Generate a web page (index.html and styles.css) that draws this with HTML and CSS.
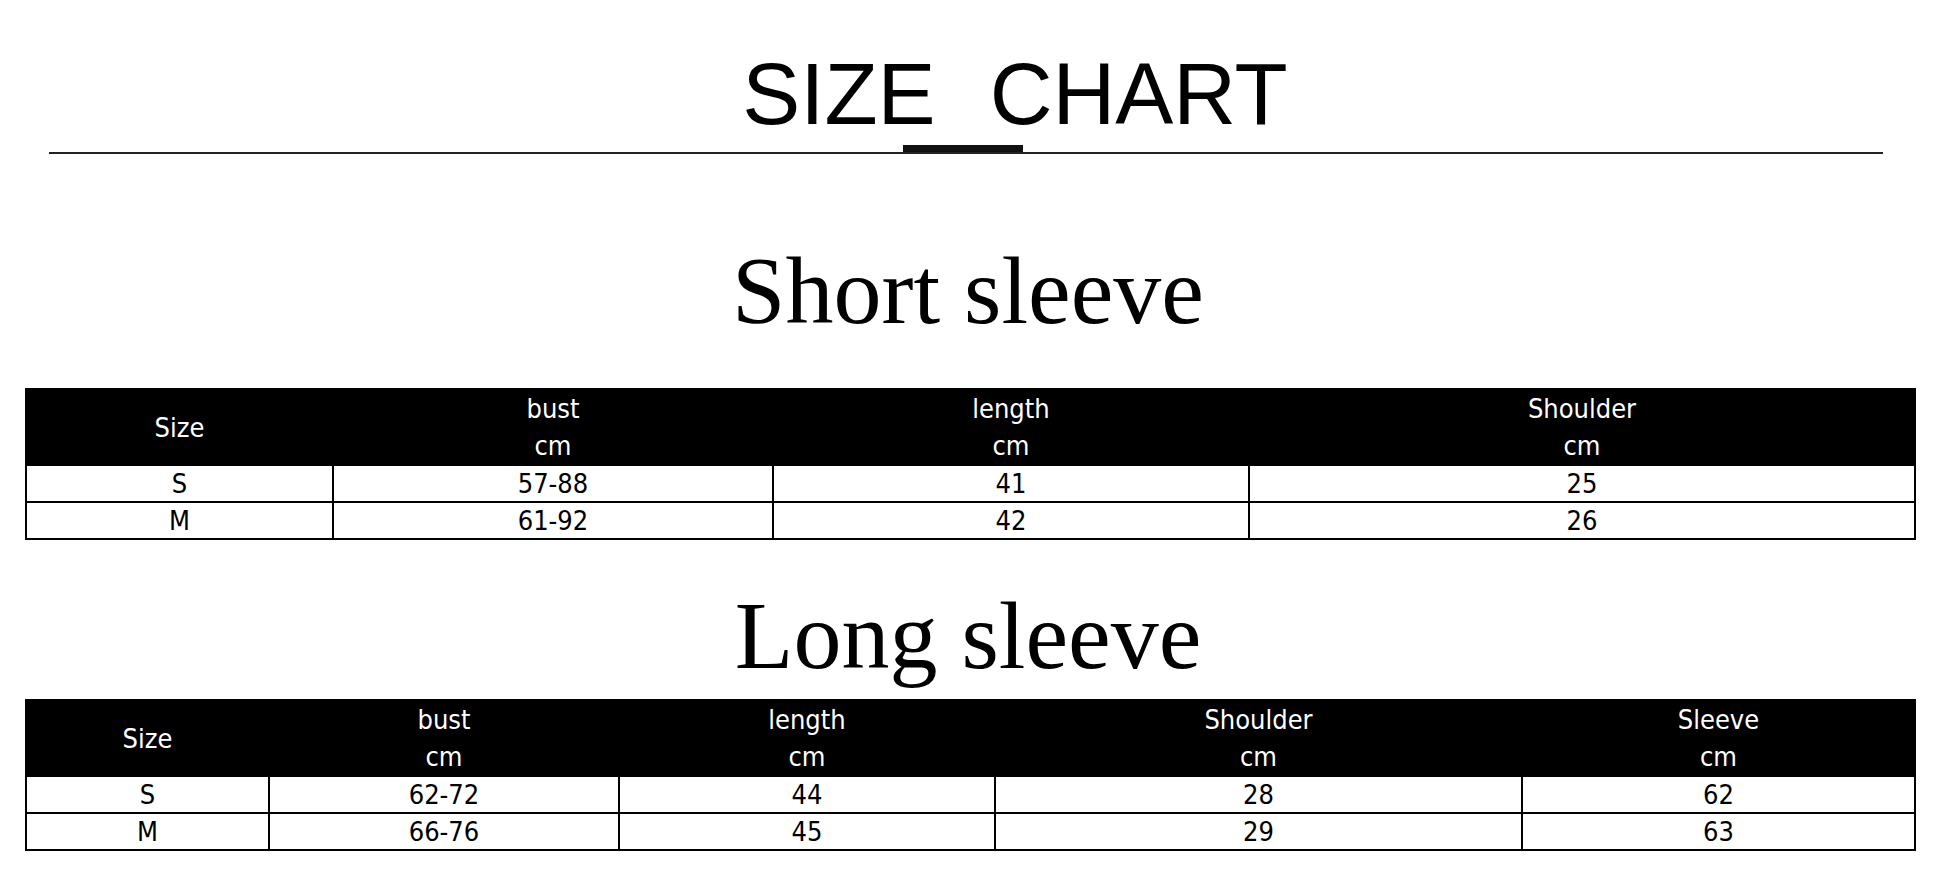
FILE: index.html
```html
<!DOCTYPE html>
<html>
<head>
<meta charset="utf-8">
<link rel="stylesheet" href="styles.css">
</head>
<body>
<div class="page">
  <div class="title"><span>SIZE</span><span>CHART</span></div>
  <div class="rule"><div class="rule-bar"></div></div>

  <h2 class="section short">Short sleeve</h2>
  <table class="chart chart-short">
    <colgroup>
      <col class="s1"><col class="s2"><col class="s3"><col class="s4">
    </colgroup>
    <thead>
      <tr><th>Size</th><th>bust<br>cm</th><th>length<br>cm</th><th>Shoulder<br>cm</th></tr>
    </thead>
    <tbody>
      <tr><td>S</td><td>57-88</td><td>41</td><td>25</td></tr>
      <tr><td>M</td><td>61-92</td><td>42</td><td>26</td></tr>
    </tbody>
  </table>

  <h2 class="section long">Long sleeve</h2>
  <table class="chart chart-long">
    <colgroup>
      <col class="l1"><col class="l2"><col class="l3"><col class="l4"><col class="l5">
    </colgroup>
    <thead>
      <tr><th>Size</th><th>bust<br>cm</th><th>length<br>cm</th><th>Shoulder<br>cm</th><th>Sleeve<br>cm</th></tr>
    </thead>
    <tbody>
      <tr><td>S</td><td>62-72</td><td>44</td><td>28</td><td>62</td></tr>
      <tr><td>M</td><td>66-76</td><td>45</td><td>29</td><td>63</td></tr>
    </tbody>
  </table>
</div>
</body>
</html>
```
FILE: styles.css
```css
html, body {
  margin: 0;
  padding: 0;
  background: #fff;
}

.page {
  width: 1936px;
  height: 871px;
  overflow: hidden;
  display: flex;
  flex-direction: column;
}

.title {
  display: flex;
  justify-content: center;
  gap: 54px;
  padding-left: 94px;
  margin-top: 50px;
  font-family: "Liberation Sans", Arial, sans-serif;
  font-size: 87px;
  line-height: 87px;
  color: #000;
}

.rule {
  margin: 8px 53px 0 49px;
  height: 7px;
  border-bottom: 2px solid #222;
  display: flex;
}

.rule-bar {
  margin-left: 854px;
  width: 120px;
  height: 7px;
  background: #111;
}

.section {
  margin: 0;
  text-align: center;
  font-family: "Liberation Serif", "Times New Roman", serif;
  font-weight: normal;
  font-size: 96px;
  line-height: 96px;
  color: #000;
}

.short { margin-top: 89px; }
.long { margin-top: 48px; }

.chart {
  margin-left: 25px;
  width: 1889px;
  table-layout: fixed;
  border-collapse: collapse;
  border: 2px solid #000;
  font-family: "DejaVu Sans Condensed", "DejaVu Sans", sans-serif;
  font-stretch: condensed;
  font-size: 27px;
  color: #000;
}

.chart-short { margin-top: 49px; }
.chart-long { margin-top: 15px; }

.chart th {
  background: #000;
  color: #fff;
  font-weight: normal;
  height: 74px;
  padding: 0;
  line-height: 37px;
  text-align: center;
  border: 2px solid #000;
}

.chart td {
  height: 35px;
  padding: 0;
  line-height: 35px;
  text-align: center;
  border: 2px solid #000;
}

.s1 { width: 307px; }
.s2 { width: 440px; }
.s3 { width: 476px; }
.s4 { width: 666px; }

.l1 { width: 243px; }
.l2 { width: 350px; }
.l3 { width: 376px; }
.l4 { width: 527px; }
.l5 { width: 393px; }
```
